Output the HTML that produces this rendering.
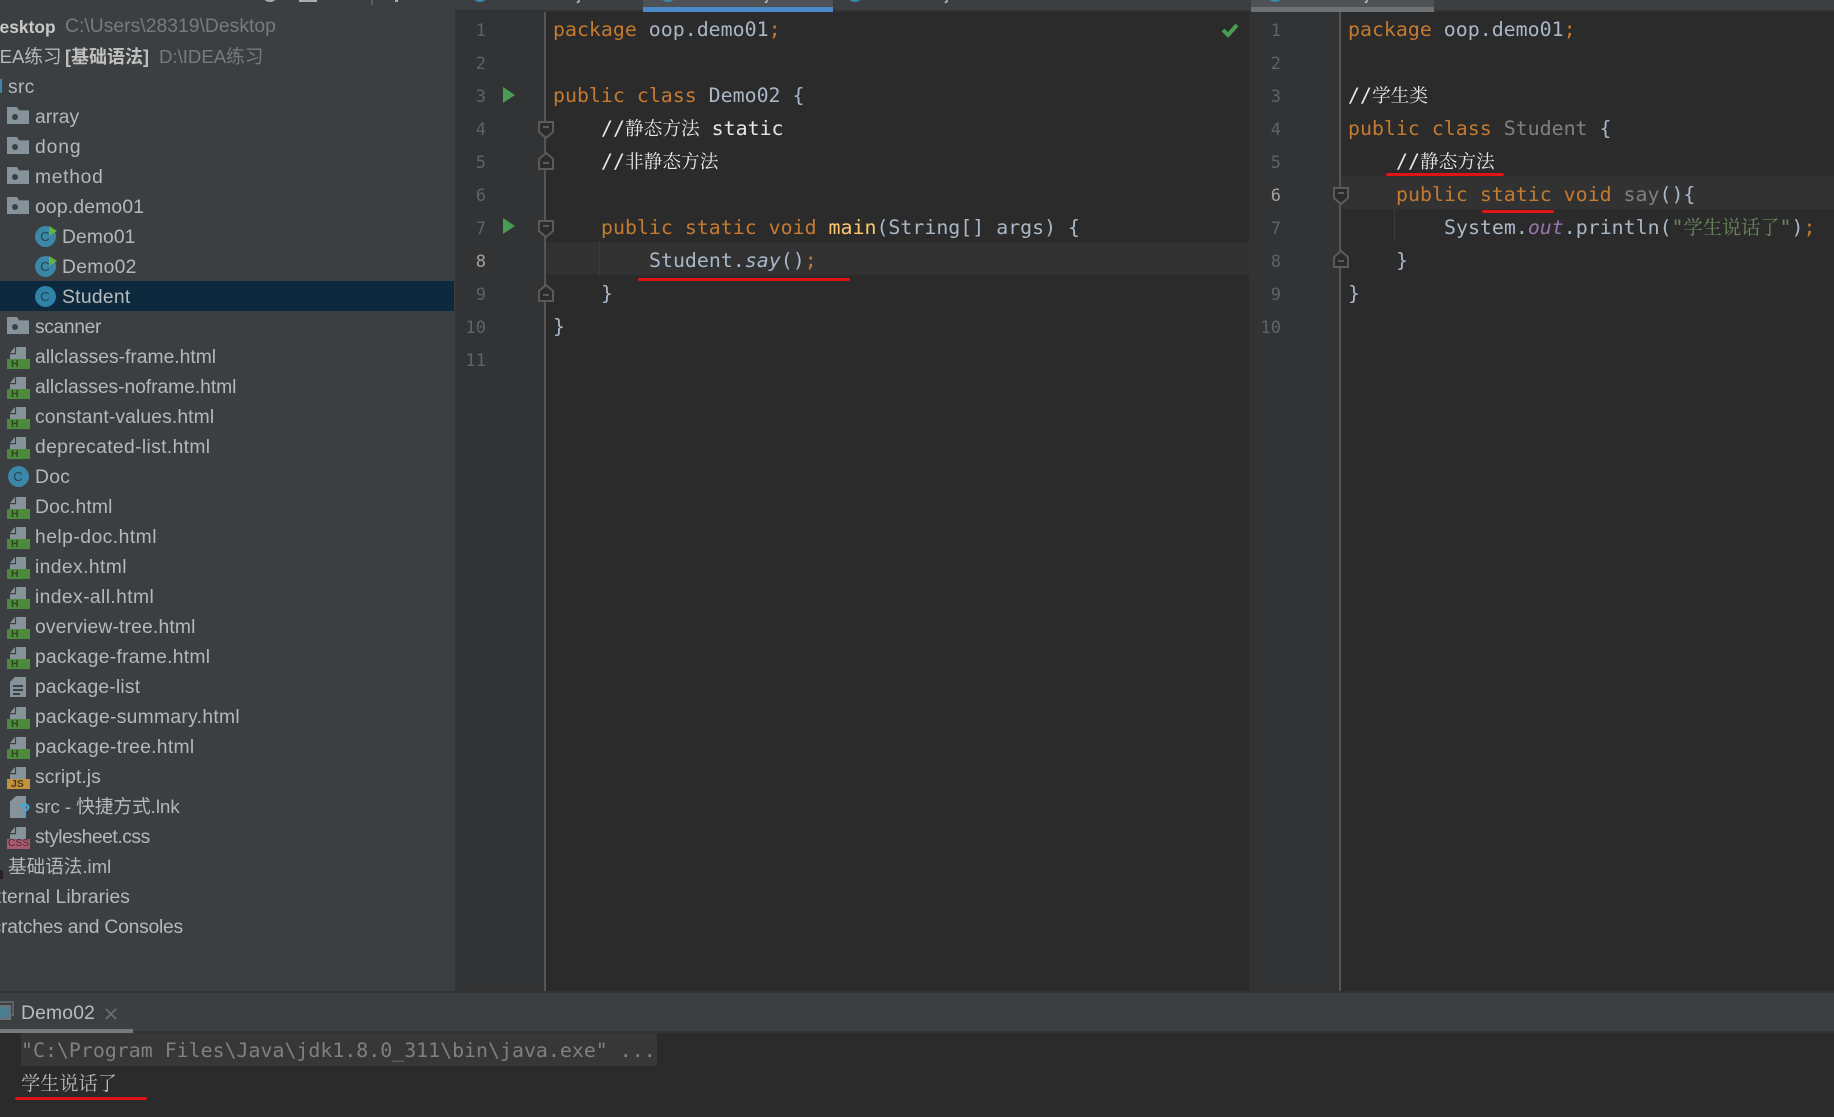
<!DOCTYPE html>
<html><head><meta charset="utf-8"><title>IDEA</title>
<style>
*{margin:0;padding:0;box-sizing:border-box}
html,body{width:1834px;height:1117px;overflow:hidden;background:#2b2b2b}
body{position:relative;font-family:"Liberation Sans","Noto Sans CJK SC",sans-serif}
.a{position:absolute}
#side{left:0;top:0;width:455px;height:991px;background:#3c3f41;overflow:hidden}
.r{position:absolute;left:0;width:454px;height:30px;line-height:30px;font-size:19.3px;letter-spacing:.3px;color:#b4b8bb;white-space:pre}
.r b.t,.r span.t{position:absolute;top:2px;font-weight:normal}
.r .t{left:35px}
.r .t2{left:62px}
.r .c{font-size:18.6px;letter-spacing:0}
.r i{position:absolute;display:block;font-style:normal;letter-spacing:0}
.fo{left:7px;top:6px;width:22px;height:17px;background:#87939a;clip-path:polygon(0 0,45% 0,55% 20%,100% 20%,100% 100%,0 100%)}
.fd{left:12px;top:13px;width:6px;height:6px;border-radius:50%;background:#3c3f41}
.doc{left:10px;top:6px;width:16px;height:12px;background:#87939a;clip-path:polygon(0 50%,31% 0,31% 50%,0 50%,0 60%,38% 60%,38% 0,100% 0,100% 100%,0 100%)}
.bd{left:7px;top:18px;width:23px;height:10px;font:bold 10.5px/10px "Liberation Sans",sans-serif;padding-left:4px;color:#2c4a26;background:#4d8a3c}
.cl{width:21px;height:21px;border-radius:50%;background:#3a87a8;top:5px;color:#26414e;font:13px/21px "Liberation Sans",sans-serif;text-align:center}
.run{left:49px;top:0px;width:8px;height:10px;background:#62b543;clip-path:polygon(0 0,100% 50%,0 100%)}
.gut{background:#313335}
.code{position:absolute;white-space:pre;height:33px;line-height:33px;margin-top:-1px;font-family:"DejaVu Sans Mono","Noto Serif CJK SC",monospace;font-size:19.9px;color:#a9b7c6}
.code.cj{margin-top:-2px}
.code u{text-decoration:none;font-family:"Noto Serif CJK SC",serif;font-size:18.7px}
.k{color:#c47a30}.w{color:#e6e6e6}.y{color:#ffc66d}.g{color:#808080}.p{color:#9876aa;font-style:italic}.s{color:#6a8759}
.n{position:absolute;width:30px;text-align:right;height:33px;line-height:33px;margin-top:1px;font-family:"DejaVu Sans Mono",monospace;font-size:17px;color:#606366}
.red{position:absolute;height:3px;background:#e01414;border-radius:2px}
.tabj{position:absolute;top:-18px;height:22px;line-height:22px;font-size:18px;color:#bbb;white-space:pre}
.dot{position:absolute;top:-9px;width:14px;height:11px;border-radius:50%;background:#3a87a8}
</style></head>
<body>
<div class="a" id="side">
<div class="a" style="left:264px;top:-6px;width:12px;height:8px;border-radius:50%;background:#a9acae"></div>
<div class="a" style="left:299px;top:0;width:18px;height:2px;background:#a9acae"></div>
<div class="a" style="left:371px;top:0;width:2px;height:5px;background:#5a5d5f"></div>
<div class="a" style="left:395px;top:0;width:3px;height:2px;background:#a9acae"></div>

<div class="r" style="top:11px"><b class="t" style="left:-13px;top:1px;font-weight:bold;font-size:17.4px;letter-spacing:0;color:#c8c8c8">Desktop</b><span class="t" style="left:65px;top:1px;color:#787b7d;letter-spacing:.04px">C:\Users\28319\Desktop</span></div>
<div class="r" style="top:41px"><span class="t c" style="left:-19px;top:1px;color:#b4b8bb">IDEA练习</span><b class="t" style="left:65px;top:1px;font-weight:bold;font-size:18px;letter-spacing:0;color:#c0c0c0">[基础语法]</b><span class="t c" style="left:159px;top:1px;color:#787b7d">D:\IDEA练习</span></div>
<div class="r" style="top:71px"><i style="left:0;top:8px;width:2px;height:14px;background:#3a87a8"></i><span class="t" style="left:8px">src</span></div>
<div class="r" style="top:101px"><i class="fo"></i><i class="fd"></i><span class="t" style="letter-spacing:.05px">array</span></div>
<div class="r" style="top:131px"><i class="fo"></i><i class="fd"></i><span class="t" style="letter-spacing:.9px">dong</span></div>
<div class="r" style="top:161px"><i class="fo"></i><i class="fd"></i><span class="t" style="letter-spacing:.7px">method</span></div>
<div class="r" style="top:191px"><i class="fo"></i><i class="fd"></i><span class="t" style="letter-spacing:.2px">oop.demo01</span></div>
<div class="r" style="top:221px"><i class="cl" style="left:34.5px">C</i><i class="run" style="top:5px"></i><span class="t t2" style="letter-spacing:.1px">Demo01</span></div>
<div class="r" style="top:251px"><i class="cl" style="left:34.5px">C</i><i class="run" style="top:5px"></i><span class="t t2">Demo02</span></div>
<div class="r" style="top:281px;background:#0d293e;color:#bbbbbb"><i class="cl" style="left:34.5px;background:#2f82a8">C</i><span class="t t2">Student</span></div>
<div class="r" style="top:311px"><i class="fo"></i><i class="fd"></i><span class="t" style="letter-spacing:-.37px">scanner</span></div>
<div class="r" style="top:341px"><i class="doc"></i><i class="bd">H</i><span class="t" style="letter-spacing:0">allclasses-frame.html</span></div>
<div class="r" style="top:371px"><i class="doc"></i><i class="bd">H</i><span class="t" style="letter-spacing:-.05px">allclasses-noframe.html</span></div>
<div class="r" style="top:401px"><i class="doc"></i><i class="bd">H</i><span class="t" style="letter-spacing:.12px">constant-values.html</span></div>
<div class="r" style="top:431px"><i class="doc"></i><i class="bd">H</i><span class="t" style="letter-spacing:.36px">deprecated-list.html</span></div>
<div class="r" style="top:461px"><i class="cl" style="left:7.5px">C</i><span class="t">Doc</span></div>
<div class="r" style="top:491px"><i class="doc"></i><i class="bd">H</i><span class="t" style="letter-spacing:.2px">Doc.html</span></div>
<div class="r" style="top:521px"><i class="doc"></i><i class="bd">H</i><span class="t" style="letter-spacing:.48px">help-doc.html</span></div>
<div class="r" style="top:551px"><i class="doc"></i><i class="bd">H</i><span class="t" style="letter-spacing:.4px">index.html</span></div>
<div class="r" style="top:581px"><i class="doc"></i><i class="bd">H</i><span class="t" style="letter-spacing:.4px">index-all.html</span></div>
<div class="r" style="top:611px"><i class="doc"></i><i class="bd">H</i><span class="t" style="letter-spacing:.17px">overview-tree.html</span></div>
<div class="r" style="top:641px"><i class="doc"></i><i class="bd">H</i><span class="t" style="letter-spacing:.27px">package-frame.html</span></div>
<div class="r" style="top:671px"><i style="left:10px;top:6px;width:16px;height:20px;background:#87939a;clip-path:polygon(30% 0,100% 0,100% 100%,0 100%,0 25%)"></i><i style="left:13px;top:14px;width:10px;height:2px;background:#3c3f41"></i><i style="left:13px;top:18px;width:10px;height:2px;background:#3c3f41"></i><i style="left:13px;top:22px;width:7px;height:2px;background:#3c3f41"></i><span class="t" style="letter-spacing:.2px">package-list</span></div>
<div class="r" style="top:701px"><i class="doc"></i><i class="bd">H</i><span class="t">package-summary.html</span></div>
<div class="r" style="top:731px"><i class="doc"></i><i class="bd">H</i><span class="t">package-tree.html</span></div>
<div class="r" style="top:761px"><i class="doc"></i><i class="bd" style="background:#c3923c;color:#4a3a1c">JS</i><span class="t" style="letter-spacing:.05px">script.js</span></div>
<div class="r" style="top:791px"><i style="left:10px;top:5px;width:16px;height:22px;background:#87939a;clip-path:polygon(38% 0,100% 0,100% 100%,0 100%,0 25%)"></i><i style="left:19px;top:9px;font:bold 19px/24px 'Liberation Sans',sans-serif;color:#3aa7dc">?</i><span class="t c" style="top:1px">src - 快捷方式.lnk</span></div>
<div class="r" style="top:821px"><i class="doc"></i><i class="bd" style="background:#a85a70;color:#4a2a34;padding-left:1px;font-size:10px;font-weight:normal;letter-spacing:.3px">CSS</i><span class="t" style="letter-spacing:-.45px">stylesheet.css</span></div>
<div class="r" style="top:851px"><i style="left:0;top:19px;width:3px;height:9px;background:#2a2326"></i><span class="t c" style="left:8px;top:1px">基础语法.iml</span></div>
<div class="r" style="top:881px"><span class="t" style="left:-21px;letter-spacing:.05px">External Libraries</span></div>
<div class="r" style="top:911px"><span class="t" style="left:-21px;letter-spacing:-.23px">Scratches and Consoles</span></div>
</div>

<!-- tab bar -->
<div class="a" style="left:455px;top:0;width:1379px;height:10px;background:#3c3f41"></div>
<div class="a" style="left:455px;top:10px;width:1379px;height:2px;background:#323232"></div>
<div class="a" style="left:643px;top:0;width:190px;height:7px;background:#4e5254"></div>
<div class="a" style="left:643px;top:7px;width:190px;height:5px;background:#4a88c7"></div>
<div class="a" style="left:1251px;top:0;width:183px;height:7px;background:#4e5254"></div>
<div class="a" style="left:1251px;top:7px;width:183px;height:5px;background:#6f7275"></div>
<div class="dot" style="left:473px"></div><div class="tabj" style="left:504px">Demo01.java</div>
<div class="dot" style="left:661px"></div><div class="tabj" style="left:692px">Demo02.java</div>
<div class="dot" style="left:848px"></div><div class="tabj" style="left:878px">Student.java</div>
<div class="dot" style="left:1268px"></div><div class="tabj" style="left:1298px">Student.java</div>

<!-- left editor -->
<div class="a gut" style="left:455px;top:12px;width:90px;height:979px"></div>
<div class="a" style="left:547px;top:242px;width:702px;height:33px;background:#323232"></div>
<div class="a" style="left:545px;top:242px;width:2px;height:33px;background:#323232"></div>
<div class="a" style="left:599px;top:242px;width:1px;height:33px;background:#3d3d3d"></div>
<div class="a" style="left:544px;top:12px;width:2px;height:979px;background:#555555"></div>

<div class="n" style="left:456px;top:13.5px">1</div>
<div class="n" style="left:456px;top:46.5px">2</div>
<div class="n" style="left:456px;top:79.5px">3</div>
<div class="n" style="left:456px;top:112.5px">4</div>
<div class="n" style="left:456px;top:145.5px">5</div>
<div class="n" style="left:456px;top:178.5px">6</div>
<div class="n" style="left:456px;top:211.5px">7</div>
<div class="n" style="left:456px;top:244.5px;color:#a4a3a3">8</div>
<div class="n" style="left:456px;top:277.5px">9</div>
<div class="n" style="left:456px;top:310.5px">10</div>
<div class="n" style="left:456px;top:343.5px">11</div>

<svg class="a" style="left:500px;top:84px" width="18" height="152" viewBox="0 0 18 152"><path d="M3 3L15 11L3 19Z M3 134L15 142L3 150Z" fill="#499c54"/></svg>
<svg class="a" style="left:536px;top:118px" width="20" height="190" viewBox="0 0 20 190" fill="#2b2b2b" stroke="#5a5a5a" stroke-width="2">
<path d="M3 4H17V14L10 20L3 14Z"/><path d="M7 9H13"/>
<path d="M3 51V41L10 35L17 41V51Z"/><path d="M7 45H13"/>
<path d="M3 103H17V113L10 119L3 113Z"/><path d="M7 108H13"/>
<path d="M3 183V173L10 167L17 173V183Z"/><path d="M7 177H13"/>
</svg>

<div class="code" style="left:553px;top:13.5px"><span class="k">package</span> oop.demo01<span class="k">;</span></div>
<div class="code" style="left:553px;top:79.5px"><span class="k">public class</span> Demo02 {</div>
<div class="code w cj" style="left:601px;top:112.5px">//<u>静态方法</u> static</div>
<div class="code w cj" style="left:601px;top:145.5px">//<u>非静态方法</u></div>
<div class="code" style="left:601px;top:211.5px"><span class="k">public static void</span> <span class="y">main</span>(String[] args) {</div>
<div class="code" style="left:649px;top:244.5px">Student.<span style="font-style:italic">say</span>()<span class="k">;</span></div>
<div class="code" style="left:601px;top:277.5px">}</div>
<div class="code" style="left:553px;top:310.5px">}</div>
<div class="red" style="left:638px;top:277.5px;width:212px"></div>
<svg class="a" style="left:1220px;top:21px" width="20" height="18" viewBox="0 0 20 18"><path d="M3 9L8 14L17 4" fill="none" stroke="#499c54" stroke-width="4"/></svg>

<!-- right editor -->
<div class="a gut" style="left:1249px;top:12px;width:91px;height:979px"></div>
<div class="a" style="left:1341px;top:176px;width:493px;height:33px;background:#323232"></div>
<div class="a" style="left:1394px;top:209px;width:1px;height:33px;background:#3d3d3d"></div>
<div class="a" style="left:1339px;top:12px;width:2px;height:979px;background:#555555"></div>

<div class="n" style="left:1251px;top:13.5px">1</div>
<div class="n" style="left:1251px;top:46.5px">2</div>
<div class="n" style="left:1251px;top:79.5px">3</div>
<div class="n" style="left:1251px;top:112.5px">4</div>
<div class="n" style="left:1251px;top:145.5px">5</div>
<div class="n" style="left:1251px;top:178.5px;color:#a4a3a3">6</div>
<div class="n" style="left:1251px;top:211.5px">7</div>
<div class="n" style="left:1251px;top:244.5px">8</div>
<div class="n" style="left:1251px;top:277.5px">9</div>
<div class="n" style="left:1251px;top:310.5px">10</div>

<svg class="a" style="left:1331px;top:183px" width="20" height="90" viewBox="0 0 20 90" fill="#2b2b2b" stroke="#5a5a5a" stroke-width="2">
<path d="M3 5H17V15L10 21L3 15Z"/><path d="M7 10H13"/>
<path d="M3 84V74L10 68L17 74V84Z"/><path d="M7 78H13"/>
</svg>

<div class="code" style="left:1348px;top:13.5px"><span class="k">package</span> oop.demo01<span class="k">;</span></div>
<div class="code w cj" style="left:1348px;top:79.5px">//<u>学生类</u></div>
<div class="code" style="left:1348px;top:112.5px"><span class="k">public class</span> <span class="g">Student</span> {</div>
<div class="code w cj" style="left:1396px;top:145.5px">//<u>静态方法</u></div>
<div class="code" style="left:1396px;top:178.5px"><span class="k">public static void</span> <span class="g">say</span>(){</div>
<div class="code cj" style="left:1444px;top:211.5px">System.<span class="p">out</span>.println(<span class="s">"<u style="font-size:19.2px">学生说话了</u>"</span>)<span class="k">;</span></div>
<div class="code" style="left:1396px;top:244.5px">}</div>
<div class="code" style="left:1348px;top:277.5px">}</div>
<div class="red" style="left:1386px;top:172.5px;width:118px"></div>
<div class="red" style="left:1482px;top:209.5px;width:72px"></div>

<!-- bottom panel -->
<div class="a" style="left:0;top:991px;width:1834px;height:2px;background:#323232"></div>
<div class="a" style="left:0;top:993px;width:1834px;height:38px;background:#3c3f41"></div>
<div class="a" style="left:0;top:1031px;width:1834px;height:2px;background:#323232"></div>
<div class="a" style="left:0;top:1029px;width:133px;height:4px;background:#747a80"></div>
<div class="a" style="left:0;top:1001px;width:14px;height:15px;border:2px solid #5e6264;border-left:0"></div>
<div class="a" style="left:0;top:1005px;width:11px;height:15px;border:2px solid #6e7274;border-left:0;background:#4a7f92"></div>
<div class="a" style="left:21px;top:999px;height:30px;line-height:30px;font-size:19.3px;letter-spacing:.2px;color:#bbbbbb">Demo02</div>
<svg class="a" style="left:104px;top:1007px" width="14" height="14" viewBox="0 0 14 14"><path d="M2 2L12 12M12 2L2 12" stroke="#6e7072" stroke-width="1.6"/></svg>
<div class="a" style="left:0;top:1033px;width:1834px;height:84px;background:#2b2b2b"></div>
<div class="a" style="left:21px;top:1033px;width:636px;height:33px;background:#373737"></div>
<div class="code" style="left:21px;top:1034.5px;color:#808080">"C:\Program Files\Java\jdk1.8.0_311\bin\java.exe" ...</div>
<div class="code" style="left:21px;top:1067px;color:#bbbbbb"><u style="font-size:19.2px">学生说话了</u></div>
<div class="red" style="left:15px;top:1097px;width:132px"></div>
</body></html>
